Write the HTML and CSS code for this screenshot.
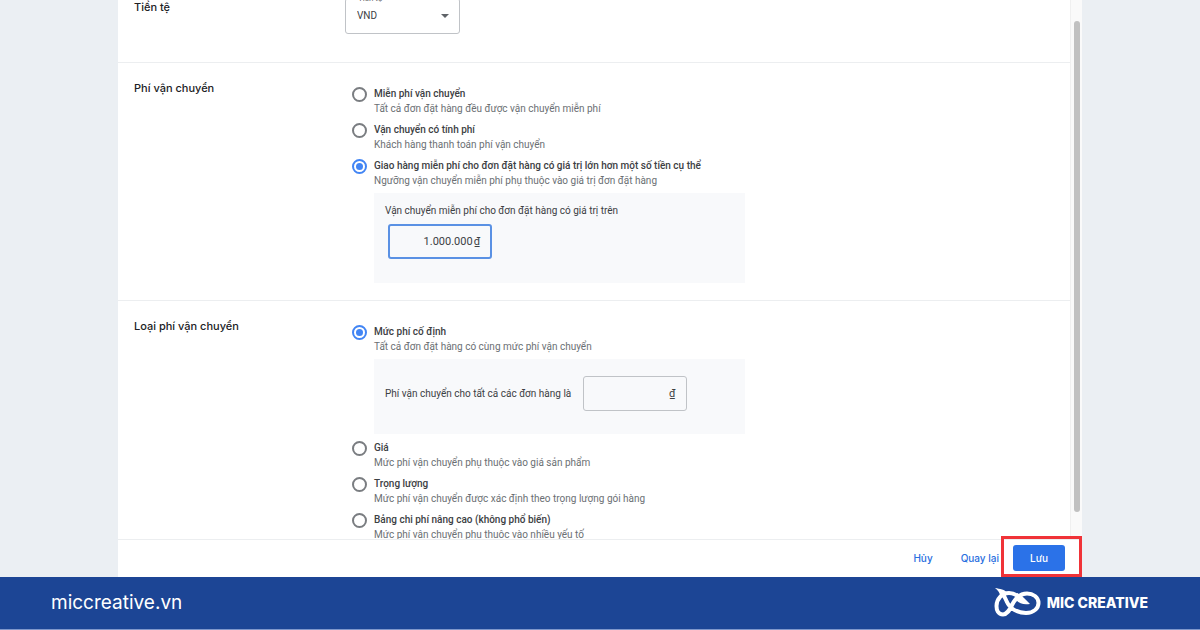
FILE: index.html
```html
<!DOCTYPE html>
<html lang="vi">
<head>
<meta charset="utf-8">
<meta name="viewport" content="width=device-width, initial-scale=1">
<title>Phí vận chuyển</title>
<link rel="stylesheet" href="styles.css">
</head>
<body>
<main class="stage">
  <form class="sheet">
    <div class="scroller">
      <div class="sections">
        <section class="section section-currency">
          <h2 class="heading">Tiền tệ</h2>
          <div class="select-field">
            <label class="select-label" for="currency">Tiền tệ</label>
            <select class="select" id="currency"><option>VND</option></select>
            <svg class="select-arrow" viewBox="0 0 8 4" aria-hidden="true"><path d="M0 0h8L4 4z"/></svg>
          </div>
        </section>

        <section class="section">
          <h2 class="heading">Phí vận chuyển</h2>
          <div class="options">
            <div class="option">
              <input class="radio" type="radio" name="fee" id="fee-free">
              <label class="option-title" for="fee-free">Miễn phí vận chuyển</label>
              <p class="option-text">Tất cả đơn đặt hàng đều được vận chuyển miễn phí</p>
            </div>
            <div class="option">
              <input class="radio" type="radio" name="fee" id="fee-paid">
              <label class="option-title" for="fee-paid">Vận chuyển có tính phí</label>
              <p class="option-text">Khách hàng thanh toán phí vận chuyển</p>
            </div>
            <div class="option">
              <input class="radio" type="radio" name="fee" id="fee-over" checked>
              <label class="option-title" for="fee-over">Giao hàng miễn phí cho đơn đặt hàng có giá trị lớn hơn một số tiền cụ thể</label>
              <p class="option-text">Ngưỡng vận chuyển miễn phí phụ thuộc vào giá trị đơn đặt hàng</p>
              <div class="detail detail-stacked">
                <label class="detail-label" for="threshold">Vận chuyển miễn phí cho đơn đặt hàng có giá trị trên</label>
                <div class="amount amount-active">
                  <input class="amount-input" id="threshold" type="text" value="1.000.000">
                  <span class="unit">₫</span>
                </div>
              </div>
            </div>
          </div>
        </section>

        <section class="section">
          <h2 class="heading">Loại phí vận chuyển</h2>
          <div class="options">
            <div class="option">
              <input class="radio" type="radio" name="rate" id="rate-flat" checked>
              <label class="option-title" for="rate-flat">Mức phí cố định</label>
              <p class="option-text">Tất cả đơn đặt hàng có cùng mức phí vận chuyển</p>
              <div class="detail detail-inline">
                <label class="detail-label" for="flat">Phí vận chuyển cho tất cả các đơn hàng là</label>
                <div class="amount">
                  <input class="amount-input" id="flat" type="text">
                  <span class="unit">₫</span>
                </div>
              </div>
            </div>
            <div class="option">
              <input class="radio" type="radio" name="rate" id="rate-price">
              <label class="option-title" for="rate-price">Giá</label>
              <p class="option-text">Mức phí vận chuyển phụ thuộc vào giá sản phẩm</p>
            </div>
            <div class="option">
              <input class="radio" type="radio" name="rate" id="rate-weight">
              <label class="option-title" for="rate-weight">Trọng lượng</label>
              <p class="option-text">Mức phí vận chuyển được xác định theo trọng lượng gói hàng</p>
            </div>
            <div class="option">
              <input class="radio" type="radio" name="rate" id="rate-table">
              <label class="option-title" for="rate-table">Bảng chi phí nâng cao (không phổ biến)</label>
              <p class="option-text">Mức phí vận chuyển phụ thuộc vào nhiều yếu tố</p>
            </div>
          </div>
        </section>
      </div>
      <div class="track" aria-hidden="true"><div class="thumb"></div></div>
    </div>

    <div class="actions">
      <button class="text-button" type="button">Hủy</button>
      <button class="text-button" type="button">Quay lại</button>
      <span class="highlight"><button class="save-button" type="button">Lưu</button></span>
    </div>
  </form>
</main>

<footer class="footer">
  <a class="site" href="#">miccreative.vn</a>
  <div class="brand">
    <svg class="logo" viewBox="0 0 48 30" aria-hidden="true">
      <path class="logo-line" d="M8 5C10 7 11 10 13 14C16 21 24 25 32 25C40 25 44.500 20 44.500 15C44.500 9 39 5.500 33 5.500C25 5.500 21 11 18 17C15 23 13 26.500 9 26.500C4 26.500 2.500 22 2.500 18C2.500 11 8 5 15 5C20 5 23 7 26 10"/>
      <path class="logo-leaf" d="M1 0C6 1 11 1 13 5L11 9L6 8C6 5 4 2 1 0zM23 5C28 7 31 11 36 16C30 17 26 16 22 12z"/>
    </svg>
    <span class="brand-name">MIC CREATIVE</span>
  </div>
</footer>
</body>
</html>
```

FILE: styles.css
```css
* {
  box-sizing: border-box;
}

body {
  margin: 0;
  height: 100vh;
  display: flex;
  flex-direction: column;
  background: #ebeff3;
  color: #3c4043;
  font: 10px/14px Roboto, "Noto Sans", sans-serif;
}

h2,
p {
  margin: 0;
}

button,
input,
select {
  font: inherit;
  color: inherit;
}

.stage {
  flex: 1;
  min-height: 0;
  padding: 0 118px;
}

.sheet {
  height: 100%;
  display: flex;
  flex-direction: column;
  background: #fff;
}

.scroller {
  flex: 1;
  min-height: 0;
  display: flex;
  overflow: hidden;
}

.sections {
  flex: 1;
}

.section {
  display: grid;
  grid-template-columns: 218px 1fr;
  padding: 18px 16px 17px;
  border-bottom: 1px solid #eceef0;
}

.section-currency {
  height: 63px;
  padding: 0 16px 28px;
  align-content: end;
  align-items: end;
  grid-template-columns: 211px 1fr;
  overflow: hidden;
}

.section-currency .heading {
  padding-bottom: 20px;
}

.heading {
  color: #202124;
  font: 500 11px/14px Inter, Roboto, sans-serif;
}

.select-field {
  position: relative;
  width: 115px;
}

.select {
  display: block;
  width: 100%;
  height: 36px;
  padding: 0 11px;
  border: 1px solid #c0c3c7;
  border-radius: 3px;
  background: #fff;
  appearance: none;
}

.select-label {
  position: absolute;
  top: -5px;
  left: 9px;
  padding: 0 4px;
  background: #fff;
  color: #5f6368;
  font-size: 8px;
  line-height: 12px;
}

.select-arrow {
  position: absolute;
  top: 16px;
  right: 11px;
  width: 8px;
  height: 4px;
  fill: #5f6368;
}

.options {
  display: flex;
  flex-direction: column;
  gap: 7px;
  padding-top: 6px;
}

.option {
  display: grid;
  grid-template-columns: 15px 1fr;
  column-gap: 7px;
}

.option > * {
  grid-column: 2;
}

.option > .radio {
  grid-column: 1;
  grid-row: 1;
}

.radio {
  width: 15px;
  height: 15px;
  margin: 0;
  border: 2px solid #7a7d81;
  border-radius: 50%;
  background: #fff;
  appearance: none;
}

.radio:checked {
  border-color: #4285f4;
  background: #4285f4;
  background-clip: content-box;
  padding: 2px;
}

.option-title {
  font-weight: 500;
}

.option-text {
  color: #6b6f73;
}

.detail {
  width: 100%;
  max-width: 371px;
  margin-top: 5px;
  padding: 11px;
  background: #f8f9fb;
}

.detail-stacked {
  padding-bottom: 24px;
}

.detail-stacked .amount {
  margin: 6px 3px 0;
}

.detail-inline {
  display: flex;
  align-items: center;
  gap: 12px;
  padding: 17px 11px 23px;
}

.amount {
  width: 104px;
  height: 35px;
  display: flex;
  align-items: center;
  gap: 1px;
  padding: 0 11px;
  border: 1px solid #c0c3c7;
  border-radius: 3px;
}

.amount-active {
  padding: 0 10px;
  border: 2px solid #5a91e4;
}

.amount-input {
  flex: 1;
  min-width: 0;
  padding: 0;
  border: 0;
  outline: 0;
  background: transparent;
  text-align: right;
}

.amount-input,
.unit {
  font-size: 11px;
}

.track {
  width: 12px;
  padding: 21px 2px 27px 3px;
  background: #fafafa;
  border-left: 1px solid #f0f0f0;
}

.thumb {
  height: 100%;
  border-radius: 3px;
  background: #c1c1c1;
}

.actions {
  display: flex;
  align-items: center;
  justify-content: flex-end;
  padding: 5px 17px 6px;
  border-top: 1px solid #eceef0;
}

.text-button,
.save-button {
  border: 0;
  font: 500 10px/14px Inter, Roboto, sans-serif;
}

.text-button {
  padding: 0 14px;
  background: transparent;
  color: #2a6fe0;
}

.highlight {
  position: relative;
}

.highlight::after {
  content: "";
  position: absolute;
  inset: -9px -17px -6px -12px;
  border: 3px solid #f03338;
  pointer-events: none;
}

.save-button {
  display: block;
  width: 52px;
  height: 26px;
  border-radius: 3px;
  background: #2b72e8;
  color: #fff;
}

.footer {
  height: 53px;
  display: flex;
  align-items: center;
  justify-content: space-between;
  padding: 0 52px 0 51px;
  border-bottom: 1px solid #7f97cb;
  background: #1c4595;
  color: #fff;
}

.site {
  color: inherit;
  font: 400 19px/26px Inter, sans-serif;
  text-decoration: none;
}

.brand {
  display: flex;
  align-items: center;
  gap: 5px;
}

.logo {
  width: 48px;
  height: 30px;
}

.logo-line {
  fill: none;
  stroke: #fff;
  stroke-width: 4;
}

.logo-leaf {
  fill: #fff;
}

.brand-name {
  font: 800 14px/18px Inter, sans-serif;
}
```
